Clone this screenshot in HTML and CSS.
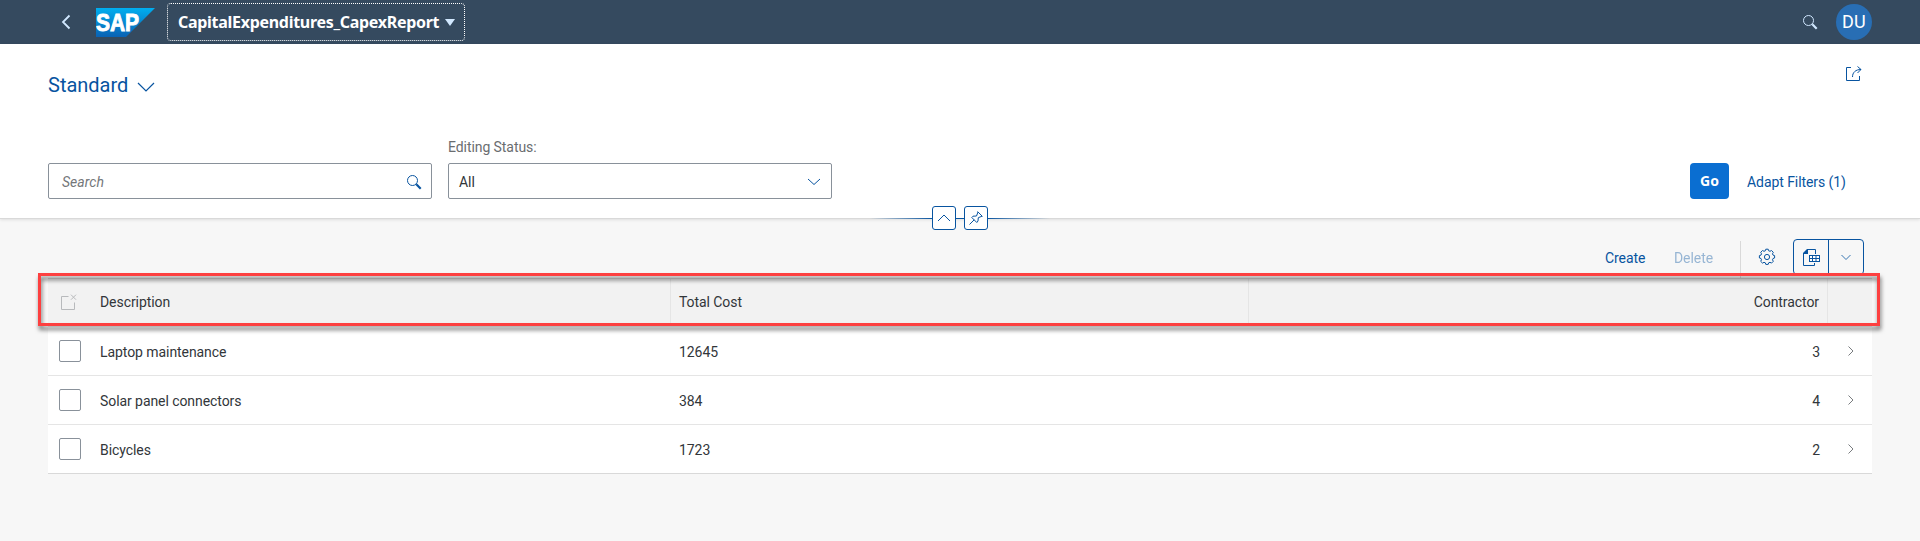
FILE: index.html
```html
<!DOCTYPE html>
<html lang="en">
<head>
<meta charset="utf-8">
<title>CapitalExpenditures_CapexReport</title>
<link rel="stylesheet" href="styles.css">
</head>
<body>
<header class="shell">
  <svg class="back" width="12" height="16" viewBox="0 0 12 16"><path d="M9.500 1.500 3 8l6.500 6.500"/></svg>
  <svg class="logo" width="59" height="29" viewBox="0 0 59 29">
    <defs><linearGradient id="sap" x1="0" y1="0" x2="0" y2="1"><stop offset="0" stop-color="#00aeef"/><stop offset="1" stop-color="#0a62b4"/></linearGradient></defs>
    <path d="M0 0H59L30 29H0Z" fill="url(#sap)"/>
    <text x="0" y="23" textLength="43" lengthAdjust="spacingAndGlyphs">SAP</text>
  </svg>
  <button class="app-title"><span>CapitalExpenditures_CapexReport</span><i class="triangle"></i></button>
  <svg class="shell-search" width="16" height="16" viewBox="0 0 16 16"><circle cx="6.500" cy="6.500" r="5"/><path class="handle" d="M10.300 10.300 14.700 14.700"/></svg>
  <span class="avatar">DU</span>
</header>

<section class="page-header">
  <div class="variant-row">
    <h1 class="variant">Standard</h1>
    <svg class="variant-arrow" width="18" height="10" viewBox="0 0 18 10"><path d="M1 1 9 9l8-8"/></svg>
    <svg class="share" width="18" height="18" viewBox="0 0 18 18"><path d="M6 2.500H1.500v13h13V11"/><path d="M7.500 12c0-4.500 3-7.500 8.500-7.500M12.500 1.500l3.500 3-3.500 3.500"/></svg>
  </div>
  <div class="filters">
    <div class="field search-field"><span class="placeholder">Search</span>
      <svg width="16" height="16" viewBox="0 0 16 16"><circle cx="6.500" cy="6.500" r="5"/><path class="handle" d="M10.300 10.300 14.700 14.700"/></svg>
    </div>
    <div class="filter">
      <label class="label">Editing Status:</label>
      <div class="field"><span class="value">All</span>
        <svg class="select-arrow" width="14" height="8" viewBox="0 0 14 8"><path d="M1 1l6 5.500L13 1"/></svg>
      </div>
    </div>
    <button class="go">Go</button>
    <a class="link adapt">Adapt Filters (1)</a>
  </div>
  <div class="collapse">
    <button class="mini"><svg width="14" height="8" viewBox="0 0 14 8"><path d="M1 7l6-6 6 6"/></svg></button>
    <button class="mini"><svg width="16" height="16" viewBox="0 0 16 16"><path d="M9.500 1.500l5 5M10 2 8.500 6 5 6.200 3.800 7.500l5 5L10 11l.3-3.300L14 6.200M6.200 9.800 1.500 14.500"/></svg></button>
  </div>
</section>

<main class="content">
  <div class="toolbar">
    <a class="link create">Create</a>
    <a class="link delete">Delete</a>
    <i class="separator"></i>
    <svg class="gear" width="18" height="18" viewBox="0 0 18 18"><path d="M7.300 2.800 7.800 1.200h2.400l.5 1.600 1.300.5 1.500-.8 1.800 1.800-.8 1.500.5 1.300 1.600.5v2.400l-1.600.5-.5 1.300.8 1.500-1.800 1.800-1.500-.8-1.300.5-.5 1.600H7.800l-.5-1.600-1.300-.5-1.500.8-1.800-1.800.8-1.500-.5-1.300-1.600-.5V7.600L3 7.100l.5-1.300-.8-1.500 1.800-1.800 1.500.8z"/><circle cx="9" cy="9" r="2.600"/></svg>
    <div class="split">
      <span class="split-main"><svg width="17" height="17" viewBox="0 0 17 17"><path d="M.5 5v11.500h11V14M4 .5h8.500V5"/><path class="solid" d="M0 5V4L4 0h1v5zM6 6h11v7H6z"/><path class="grid" d="M7 8h2M10 8h2.500M13.500 8H16M7 11h2M10 11h2.500M13.500 11H16"/></svg></span>
      <span class="split-arrow"><svg width="12" height="7" viewBox="0 0 12 7"><path d="M1.500 1 6 5.500 10.500 1"/></svg></span>
    </div>
  </div>
  <div class="table">
    <div class="row head">
      <span class="select"><svg class="clear" width="16" height="16" viewBox="0 0 16 16"><path d="M7.500 2.500h-7v13h13v-7M10 .7l5 5M15 .7l-5 5"/></svg></span>
      <span class="cell">Description</span><span class="cell">Total Cost</span><span class="cell number">Contractor</span><span class="nav"></span>
    </div>
    <div class="row"><span class="select"><i class="checkbox"></i></span><span class="cell">Laptop maintenance</span><span class="cell">12645</span><span class="cell number">3</span><span class="nav"><svg width="8" height="12" viewBox="0 0 8 12"><path d="M1.500 1.500 6 6l-4.500 4.500"/></svg></span></div>
    <div class="row"><span class="select"><i class="checkbox"></i></span><span class="cell">Solar panel connectors</span><span class="cell">384</span><span class="cell number">4</span><span class="nav"><svg width="8" height="12" viewBox="0 0 8 12"><path d="M1.500 1.500 6 6l-4.500 4.500"/></svg></span></div>
    <div class="row last"><span class="select"><i class="checkbox"></i></span><span class="cell">Bicycles</span><span class="cell">1723</span><span class="cell number">2</span><span class="nav"><svg width="8" height="12" viewBox="0 0 8 12"><path d="M1.500 1.500 6 6l-4.500 4.500"/></svg></span></div>
    <div class="highlight"></div>
  </div>
</main>
</body>
</html>
```
FILE: styles.css
```css
* { box-sizing: border-box; }
body { margin: 0; height: 541px; overflow: hidden; background: #f7f7f7; color: #32363a; font: 14px/20px Roboto, "Liberation Sans", sans-serif; letter-spacing: -.07px; }
button { font: inherit; margin: 0; padding: 0; }
svg { display: block; fill: none; stroke: #0854a0; stroke-width: 1; flex: none; }
.handle { stroke-width: 2.2; }

.shell { height: 44px; background: #354a5f; display: flex; align-items: center; padding: 0 48px 0 60px; }
.back { stroke: #d1e8ff; stroke-width: 1.8; }
.logo { margin: 1px 0 0 24px; stroke: none; }
.logo text { font: bold 23px "Liberation Sans", sans-serif; fill: #fff; stroke: #fff; stroke-width: .9; }
.app-title { margin-left: 12px; width: 298px; height: 38px; border: 1px dotted #fff; border-radius: 4px; background: none; color: #fff; font: bold 16px/20px "Noto Sans", sans-serif; display: flex; align-items: center; padding: 0 9px 0 10px; justify-content: space-between; letter-spacing: -.29px; }
.triangle { border: 5px solid transparent; border-top: 7px solid #d1e8ff; border-bottom: 0; }
.shell-search { margin-left: auto; stroke: #d1e8ff; }
.avatar { width: 36px; height: 36px; margin-left: 18px; border-radius: 50%; background: #286eb4; color: #fff; font-size: 18px; line-height: 36px; text-align: center; letter-spacing: .2px; }

.page-header { height: 175px; background: #fff; border-bottom: 1px solid #d9d9d9; box-shadow: 0 1px 3px rgba(0,0,0,.1); padding: 0 48px; position: relative; }
.variant-row { display: flex; height: 82px; padding-top: 28px; align-items: flex-start; }
.variant { margin: 0; font-size: 20px; line-height: 26px; font-weight: 400; color: #0854a0; letter-spacing: 0; }
.variant-arrow { margin: 10px 0 0 9px; stroke-width: 1.2; }
.share { margin: -7px 9px 0 auto; }
.filters { display: flex; align-items: flex-end; height: 73px; }
.field { width: 384px; height: 36px; border: 1px solid #89919a; border-radius: 2px; display: flex; align-items: center; justify-content: space-between; padding: 1px 10px 0; }
.search-field { padding-left: 13px; padding-right: 9px; }
.placeholder { color: #74777a; font-style: italic; letter-spacing: .05px; }
.filter { margin-left: 16px; }
.label { display: block; color: #6a6d70; margin-bottom: 6px; }
.go { margin-left: auto; width: 39px; height: 36px; padding-bottom: 2px; border: 0; border-radius: 4px; background: #0a6ed1; color: #fff; font: bold 14px "Noto Sans", sans-serif; }
.link { color: #0854a0; white-space: nowrap; }
.adapt { width: 99px; margin: 0 26px 7px 18px; }
.collapse { position: absolute; left: 870px; top: 162px; width: 180px; height: 24px; display: flex; gap: 8px; justify-content: center; background: linear-gradient(90deg, transparent, #0854a0 35%, #0854a0 65%, transparent) 0 12px / 100% 1px no-repeat; }
.mini { width: 24px; height: 24px; border: 1px solid #0854a0; border-radius: 3px; background: #fff; display: flex; align-items: center; justify-content: center; }

.content { padding: 20px 48px 0; }
.toolbar { height: 39px; display: flex; justify-content: flex-end; padding-right: 8px; }
.create { width: 69px; margin-top: 9px; }
.delete { width: 66px; margin-top: 9px; opacity: .4; }
.separator { width: 1px; margin-top: 2px; background: #d9d9d9; }
.gear { margin: 9px 0 0 17px; }
.split { width: 71px; height: 36px; margin-left: 17px; border: 1px solid #0854a0; border-radius: 4px; display: flex; }
.split span { flex: 1; display: flex; align-items: center; justify-content: center; }
.split-main { border-right: 1px solid #0854a0; }
.split-arrow svg { stroke-width: .8; }
.solid { fill: #0854a0; stroke: none; }
.grid { stroke: #fff; stroke-width: 2; }

.table { position: relative; background: #fff; border-top: 1px solid #d9d9d9; }
.row { display: grid; grid-template-columns: 44px 579px 578px 578px 45px; height: 49px; align-items: center; border-bottom: 1px solid #e5e5e5; }
.head { height: 48px; background: #f2f2f2; grid-template-columns: 44px 579px 578px 579px 44px; }
.last { border-bottom-color: #d9d9d9; }
.cell { padding: 1px 8px 0; }
.head .cell { height: 47px; line-height: 45px; border-right: 1px solid #e5e5e5; }
.number { text-align: right; }
.row:not(.head) .number { padding-right: 7px; }
.checkbox { display: block; width: 22px; height: 22px; margin-left: 11px; border: 1px solid #89919a; border-radius: 2px; }
.clear { stroke: #b8babc; margin: -2px 0 0 13px; }
.nav svg { margin-left: 20px; margin-top: -1px; stroke: #6a6d70; stroke-width: .9; }
.highlight { position: absolute; left: -10px; top: -6px; width: 1842px; height: 53px; border: 3px solid #fd4040; filter: drop-shadow(1px 4px 2px rgba(0,0,0,.55)); }
```
